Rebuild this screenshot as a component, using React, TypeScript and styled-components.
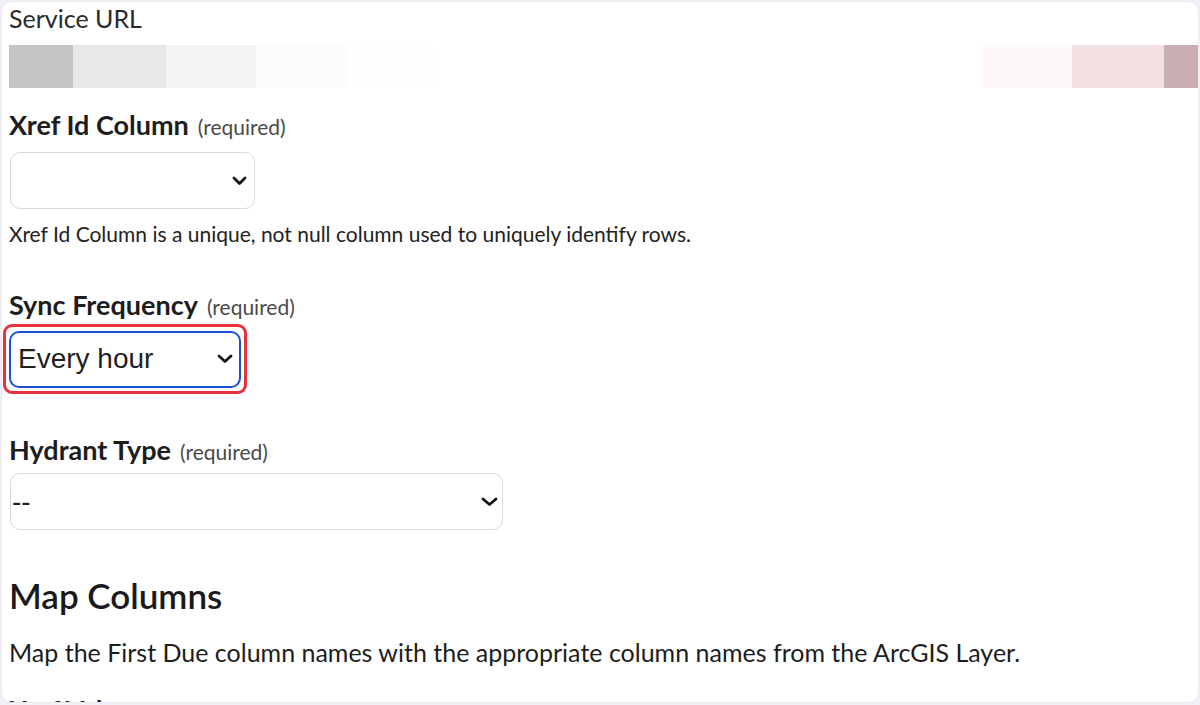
import React from "react";
import styled, { createGlobalStyle } from "styled-components";

const Global = createGlobalStyle`
  html, body { margin: 0; padding: 0; background: #f1f0f6; }
  body { font-family: Lato, "Noto Sans", sans-serif; color: #1f1f1f; }
  #root { height: 705px; overflow: hidden; }
`;

const Card = styled.div`
  margin: 1px 1px 0 1px;
  height: 702px;
  box-sizing: border-box;
  background: #ffffff;
  border: 1px solid #e9e8ef;
  border-radius: 10px;
  padding: 0 0 0 7px;
  overflow: hidden;
`;

const ServiceLabel = styled.div`
  font-size: 25px;
  line-height: 30px;
  margin-top: 1px;
  color: #2a2a2a;
`;

const Strip = styled.div`
  margin-top: 12px;
  height: 43px;
  display: flex;
`;

const Block = styled.div<{ $w: number; $c: string; $grow?: boolean }>`
  width: ${(p) => p.$w}px;
  flex: ${(p) => (p.$grow ? "1 1 auto" : "0 0 auto")};
  background: ${(p) => p.$c};
`;

const Label = styled.div<{ $mt: number }>`
  margin-top: ${(p) => p.$mt}px;
  display: flex;
  align-items: baseline;
  gap: 9px;
  line-height: 32px;
  white-space: nowrap;
`;

const LabelText = styled.span`
  font-size: 27px;
  font-weight: 700;
  color: #1d1d1d;
`;

const Req = styled.span`
  font-size: 21px;
  color: #4a4a4a;
`;

const SelectWrap = styled.div<{ $w: number; $mt: number }>`
  position: relative;
  width: ${(p) => p.$w}px;
  margin-top: ${(p) => p.$mt}px;
  margin-left: 1px;
`;

const Select = styled.div<{ $focus?: boolean }>`
  box-sizing: border-box;
  height: 57px;
  border: ${(p) => (p.$focus ? "2px solid #1d4ed8" : "1px solid #d9d9d9")};
  border-radius: 10px;
  background: #fff;
  display: flex;
  align-items: center;
  padding-left: ${(p) => (p.$focus ? "7px" : "1px")};
  font-family: "Liberation Sans", Arial, sans-serif;
  font-size: 28px;
  color: #1f1f1f;
`;

const Chevron = styled.svg<{ $r: number; $w: number }>`
  position: absolute;
  right: ${(p) => p.$r}px;
  top: 50%;
  transform: translateY(-50%);
  width: ${(p) => p.$w}px;
  height: 10px;
`;

const Highlight = styled.div`
  margin-top: 1px;
  margin-left: -6px;
  width: 244px;
  box-sizing: border-box;
  border: 3px solid #e8313f;
  border-radius: 9px;
  padding: 4px 3px 3px 2px;
`;

const Help = styled.div`
  margin-top: 12px;
  font-size: 21px;
  line-height: 26px;
  color: #222;
  white-space: nowrap;
`;

const Heading = styled.div`
  margin-top: 43.5px;
  font-size: 35px;
  font-weight: 600;
  line-height: 42px;
  color: #1a1a1a;
`;

const Para = styled.div`
  margin-top: 21px;
  font-size: 25px;
  line-height: 30px;
  color: #1d1d1d;
  white-space: nowrap;
`;

const Arrow = ({ r, w }: { r: number; w: number }) => (
  <Chevron $r={r} $w={w} viewBox={`0 0 ${w} 10`}>
    <path
      d={`M2 2 L${w / 2} ${7.5} L${w - 2} 2`}
      fill="none"
      stroke="#111"
      strokeWidth="2.8"
      strokeLinecap="round"
      strokeLinejoin="round"
    />
  </Chevron>
);

export default function App() {
  return (
    <>
      <Global />
      <Card>
        <ServiceLabel>Service URL</ServiceLabel>
        <Strip>
          <Block $w={64} $c="#c4c4c4" />
          <Block $w={93} $c="#e8e8e8" />
          <Block $w={90} $c="#f4f4f4" />
          <Block $w={90} $c="#fbfbfb" />
          <Block $w={90} $c="#fefefe" />
          <Block $w={0} $c="#ffffff" $grow />
          <Block $w={90} $c="#fdf8f8" />
          <Block $w={92} $c="#f2e0e2" />
          <Block $w={34} $c="#c9afb2" />
        </Strip>
        <Label $mt={20.5}>
          <LabelText>Xref Id Column</LabelText>
          <Req>(required)</Req>
        </Label>
        <SelectWrap $w={245} $mt={9.5}>
          <Select />
          <Arrow r={8} w={15} />
        </SelectWrap>
        <Help>Xref Id Column is a unique, not null column used to uniquely identify rows.</Help>
        <Label $mt={41.5}>
          <LabelText>Sync Frequency</LabelText>
          <Req>(required)</Req>
        </Label>
        <Highlight>
          <SelectWrap $w={232} $mt={0}>
            <Select $focus>Every hour</Select>
            <Arrow r={8} w={16} />
          </SelectWrap>
        </Highlight>
        <Label $mt={40.5}>
          <LabelText>Hydrant Type</LabelText>
          <Req>(required)</Req>
        </Label>
        <SelectWrap $w={493} $mt={5}>
          <Select>--</Select>
          <Arrow r={5} w={17} />
        </SelectWrap>
        <Heading>Map Columns</Heading>
        <Para>Map the First Due column names with the appropriate column names from the ArcGIS Layer.</Para>
        <Label $mt={27}>
          <LabelText>Xref Value</LabelText>
        </Label>
      </Card>
    </>
  );
}
